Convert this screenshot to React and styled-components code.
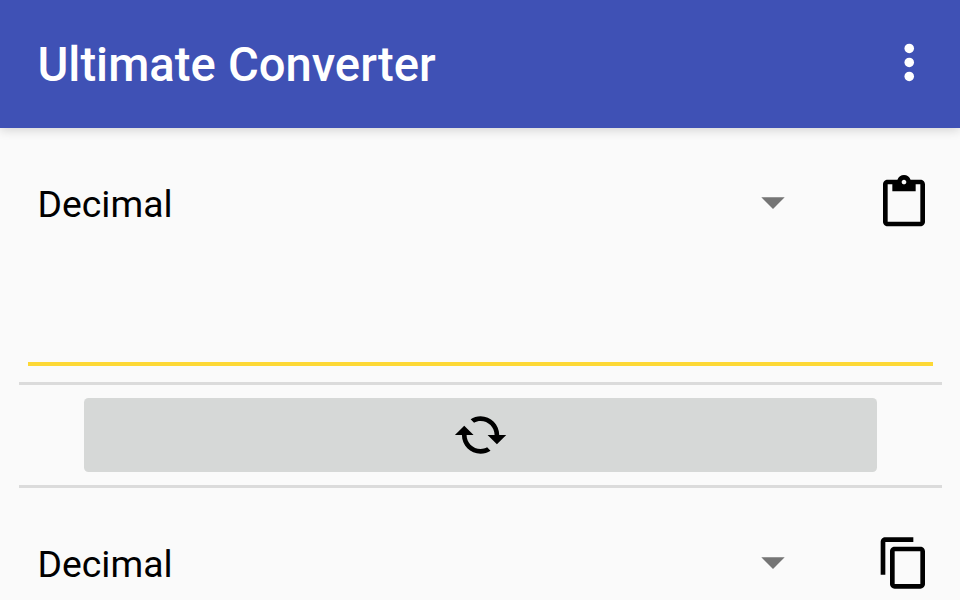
import React from "react";
import styled, { createGlobalStyle } from "styled-components";

const GlobalStyle = createGlobalStyle`
  *, *::before, *::after { box-sizing: border-box; }
  html, body { margin: 0; height: 100%; overflow: hidden; }
  body {
    background: #fafafa;
    color: #000;
    font-family: Roboto, sans-serif;
  }
`;

const Screen = styled.div`
  display: flex;
  flex-direction: column;
  width: 960px;
  height: 600px;
  overflow: hidden;
  background: #fafafa;
`;

const AppBar = styled.header`
  display: flex;
  flex: none;
  align-items: center;
  justify-content: space-between;
  height: 127.5px;
  padding: 0 22.7px 2px 37.5px;
  background: #3f51b5;
  box-shadow: 0 2px 10px rgba(0, 0, 0, 0.16);
`;

const Title = styled.h1`
  margin: 0;
  padding-top: 4px;
  color: #fff;
  font-size: 47.2px;
  font-weight: 500;
  line-height: 56px;
  word-spacing: 0.5px;
  white-space: nowrap;
`;

const IconButton = styled.button`
  display: flex;
  flex: none;
  padding: 0;
  border: 0;
  background: none;
  color: ${({ $color }) => $color || "#000"};
`;

const Icon = styled.svg`
  display: block;
  width: 56px;
  height: 56px;
  fill: currentColor;
`;

const Content = styled.main`
  display: flex;
  flex: none;
  flex-direction: column;
  padding: 0 18px 0 18.7px;
`;

const UnitRow = styled.div`
  display: flex;
  align-items: flex-start;
  height: 56px;
  margin-top: ${({ $gap }) => $gap}px;
  padding: 0 10px 0 18.8px;
`;

const Spinner = styled.div`
  display: flex;
  flex: 1;
  align-items: flex-start;
  justify-content: space-between;
  height: 56px;
  margin-right: 75px;
`;

const UnitName = styled.span`
  padding-top: 1px;
  font-size: 37.35px;
  line-height: 56px;
`;

const Caret = styled(Icon)`
  margin-top: -1px;
  color: #757575;
`;

const ValueField = styled.input`
  display: block;
  height: 123px;
  margin: 12px 9px 0;
  padding: 0 9px;
  border: 0;
  border-bottom: 4px solid #fdd835;
  outline: 0;
  background: transparent;
  font: 42px Roboto, sans-serif;
`;

const Divider = styled.hr`
  width: 100%;
  height: 3px;
  margin: ${({ $gap }) => $gap}px 0 0;
  border: 0;
  background: #dbdbdb;
`;

const SwapButton = styled.button`
  display: flex;
  align-items: center;
  justify-content: center;
  height: 74px;
  margin: 13px 65px 0 65.3px;
  padding: 0;
  border: 0;
  border-radius: 4.5px;
  background: #d6d8d7;
  color: #000;
`;

const PASTE =
  "M19 2h-4.18C14.4.84 13.3 0 12 0c-1.3 0-2.4.84-2.82 2H5c-1.1 0-2 .9-2 2v16c0 1.1.9 2 2 2h14c1.1 0 2-.9 2-2V4c0-1.1-.9-2-2-2zm-7 0c.55 0 1 .45 1 1s-.45 1-1 1-1-.45-1-1 .45-1 1-1zm7 18H5V4h2v3h10V4h2v16z";
const COPY =
  "M16 1H4c-1.1 0-2 .9-2 2v14h2V3h12V1zm3 4H8c-1.1 0-2 .9-2 2v14c0 1.1.9 2 2 2h11c1.1 0 2-.9 2-2V7c0-1.1-.9-2-2-2zm0 16H8V7h11v14z";
const SWAP =
  "M19 8l-4 4h3c0 3.31-2.69 6-6 6-1.01 0-1.97-.25-2.8-.7l-1.46 1.46C8.97 19.54 10.43 20 12 20c4.42 0 8-3.58 8-8h3l-4-4zM6 12c0-3.31 2.69-6 6-6 1.01 0 1.97.25 2.8.7l1.46-1.46C15.03 4.46 13.57 4 12 4c-4.42 0-8 3.58-8 8H1l4 4 4-4H6z";

function UnitPicker({ name, gap, action, label }) {
  return (
    <UnitRow $gap={gap}>
      <Spinner>
        <UnitName>{name}</UnitName>
        <Caret viewBox="0 0 24 24">
          <path d="M7 10l5 5 5-5z" />
        </Caret>
      </Spinner>
      <IconButton aria-label={label}>
        <Icon viewBox="0 0 24 24">
          <path d={action} />
        </Icon>
      </IconButton>
    </UnitRow>
  );
}

export default function App() {
  return (
    <>
      <GlobalStyle />
      <Screen>
        <AppBar>
          <Title>Ultimate Converter</Title>
          <IconButton aria-label="More options" $color="#fff">
            <Icon viewBox="0 0 24 24">
              <circle cx="12.1" cy="5.75" r="2.05" />
              <circle cx="12.1" cy="11.75" r="2.05" />
              <circle cx="12.1" cy="17.75" r="2.05" />
            </Icon>
          </IconButton>
        </AppBar>
        <Content>
          <UnitPicker name="Decimal" gap={47.5} action={PASTE} label="Paste" />
          <ValueField aria-label="Value" />
          <Divider $gap={16} />
          <SwapButton aria-label="Swap units">
            <Icon viewBox="0 0 24 24">
              <path d={SWAP} transform="translate(24.25 0) scale(-1 1)" />
            </Icon>
          </SwapButton>
          <Divider $gap={13} />
          <UnitPicker name="Decimal" gap={47} action={COPY} label="Copy" />
        </Content>
      </Screen>
    </>
  );
}
